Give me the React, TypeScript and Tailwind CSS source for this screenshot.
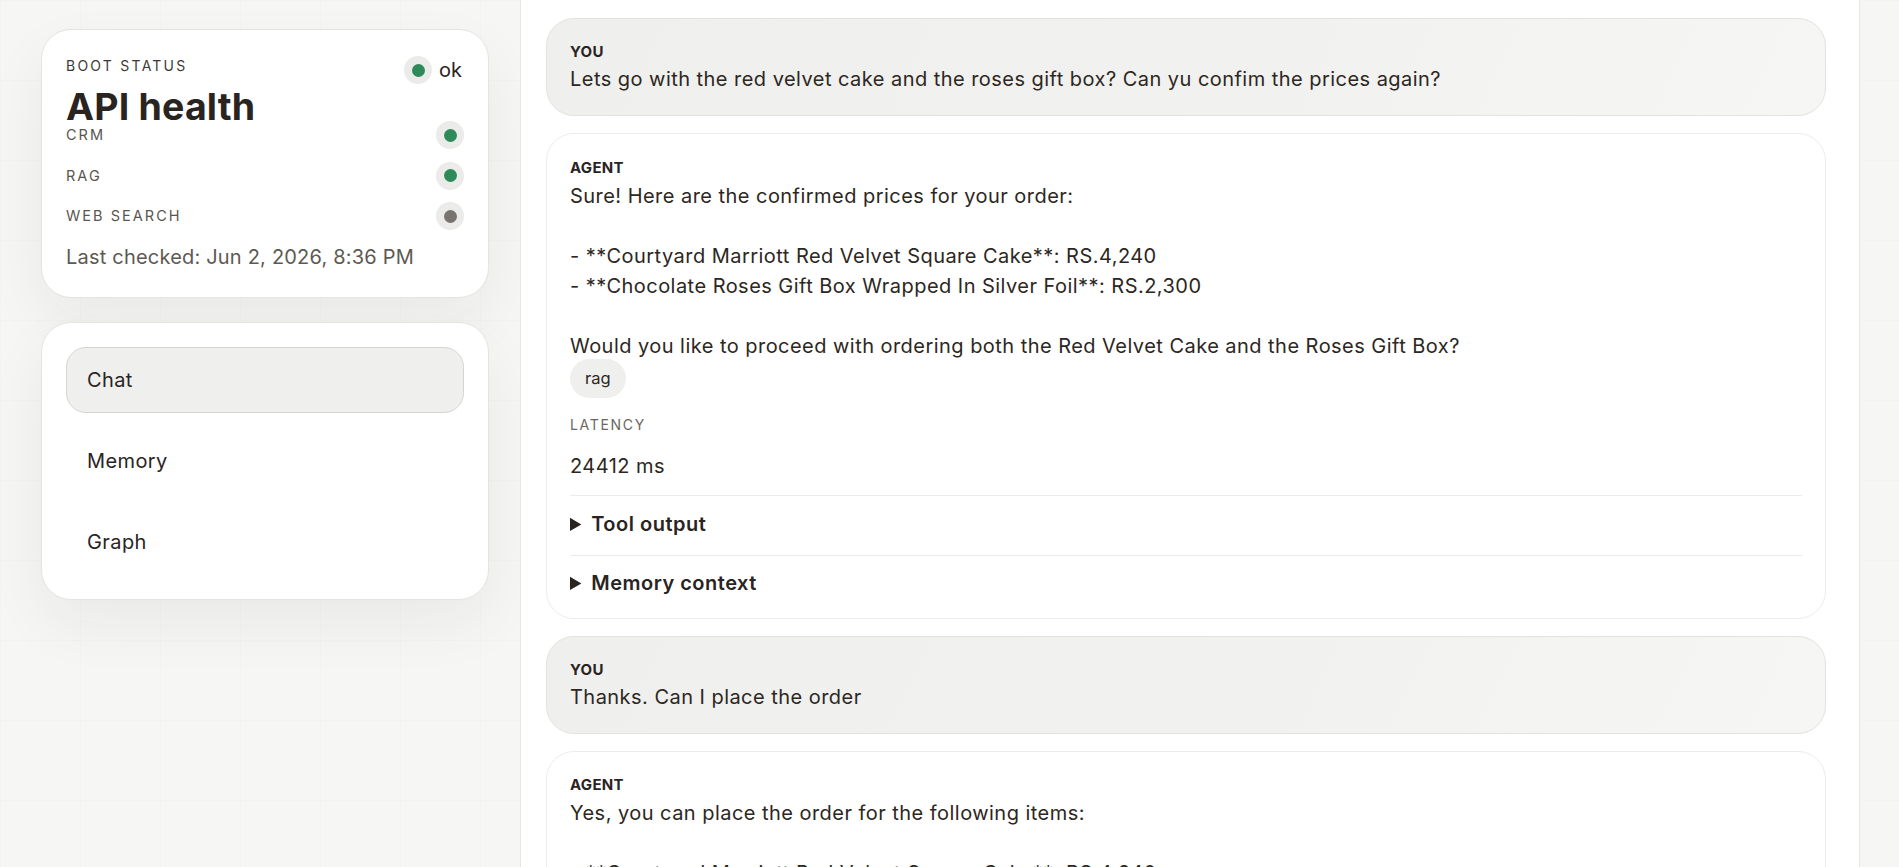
import React from "react";

const font = { fontFamily: "Inter, 'Noto Sans', sans-serif" };

// small round status light
const StatusDot = ({ tone }: { tone: string }) => (
  <span className="flex size-[28px] shrink-0 items-center justify-center rounded-full bg-[#ebebe9]">
    <span className={tone} />
  </span>
);

const green = "size-[13px] rounded-full bg-[#2e8a57]";
const grey = "size-[13px] rounded-full bg-[#7a7470]";

const services = [
  { name: "CRM", tone: green },
  { name: "RAG", tone: green },
  { name: "Web search", tone: grey },
];

const navItems = ["Chat", "Memory", "Graph"];

const HealthCard = () => (
  <section className="rounded-[30px] border border-[#e4e4e1] bg-white px-[24px] pt-[26px] pb-[25px] shadow-[0_24px_60px_rgba(40,36,30,0.06)]">
    <div className="flex items-start justify-between">
      <div>
        <p className="text-[14px] leading-[20px] tracking-[0.16em] text-[#3d3934] uppercase">Boot status</p>
        <h2 className="mt-[12px] text-[37.5px] leading-[38px] font-bold tracking-[0.005em] text-[#29241f]">API health</h2>
      </div>
      <div className="mr-[2px] flex items-center gap-[7px]">
        <StatusDot tone={green} />
        <span className="text-[20px] leading-[28px] text-[#29241f]">ok</span>
      </div>
    </div>
    <ul className="mt-[-5px] flex flex-col gap-[12.5px]">
      {services.map((s) => (
        <li key={s.name} className="flex items-center justify-between">
          <span className="text-[14.5px] tracking-[0.14em] text-[#5a5550] uppercase">{s.name}</span>
          <StatusDot tone={s.tone} />
        </li>
      ))}
    </ul>
    <p className="mt-[12px] text-[20px] leading-[30px] tracking-[0.01em] text-[#5e5953]">Last checked: Jun 2, 2026, 8:36 PM</p>
  </section>
);

const NavCard = () => (
  <nav className="flex flex-col gap-[15px] rounded-[30px] border border-[#e4e4e1] bg-white p-[24px] shadow-[0_24px_60px_rgba(40,36,30,0.06)]">
    {navItems.map((item, i) => (
      <button
        key={item}
        className={
          i === 0
            ? "flex h-[66px] items-center rounded-[20px] border border-[#d5d5d1] bg-[#eff0ee] px-[20px] text-left text-[20px] tracking-[0.02em] text-[#29241f]"
            : "flex h-[66px] items-center rounded-[20px] border border-transparent px-[20px] text-left text-[20px] tracking-[0.02em] text-[#29241f]"
        }
      >
        {item}
      </button>
    ))}
  </nav>
);

const UserBubble = ({ text }: { text: string }) => (
  <div className="shrink-0 rounded-[28px] border border-[#e2e2df] bg-[linear-gradient(115deg,#efefed_0%,#f1f1ef_55%,#f6f6f4_100%)] px-[23px] pt-[21px] pb-[21px]">
    <p className="text-[15px] leading-[24px] font-bold tracking-[0.02em] text-[#29241f]">YOU</p>
    <p className="text-[20px] leading-[30px] tracking-[0.023em] text-[#2c2722]">{text}</p>
  </div>
);

const Disclosure = ({ title, last }: { title: string; last?: boolean }) => (
  <details className={last ? "border-t border-[#ececea] pt-[12.3px]" : "border-t border-[#ececea] pt-[12.3px] pb-[15.9px]"}>
    <summary className="cursor-pointer text-[20px] leading-[30px] font-semibold tracking-[0.025em] text-[#29241f]">{title}</summary>
  </details>
);

const agentOne = `Sure! Here are the confirmed prices for your order:

- **Courtyard Marriott Red Velvet Square Cake**: RS.4,240
- **Chocolate Roses Gift Box Wrapped In Silver Foil**: RS.2,300

Would you like to proceed with ordering both the Red Velvet Cake and the Roses Gift Box?`;

const agentTwo = `Yes, you can place the order for the following items:

- **Courtyard Marriott Red Velvet Square Cake**: RS.4,240
- **Chocolate Roses Gift Box Wrapped In Silver Foil**: RS.2,300`;

const AgentCard = ({ text, meta }: { text: string; meta?: boolean }) => (
  <div className="shrink-0 rounded-[28px] border border-[#ececea] bg-white px-[23px] pt-[20.5px] pb-[20px]">
    <p className="text-[15px] leading-[26px] font-bold tracking-[0.02em] text-[#29241f]">AGENT</p>
    <p className="text-[20px] leading-[30px] tracking-[0.023em] whitespace-pre-wrap text-[#2c2722]">{text}</p>
    {meta && (
      <>
        <span className="mt-[-1.2px] flex h-[39px] w-fit items-center rounded-full bg-[#efefed] px-[15px] text-[16.5px] text-[#2c2722]">rag</span>
        <p className="mt-[17px] text-[14px] leading-[20px] tracking-[0.12em] text-[#6b6660]">LATENCY</p>
        <p className="mt-[16px] text-[20px] leading-[30px] tracking-[0.023em] text-[#2c2722]">24412 ms</p>
        <div className="mt-[14px]">
          <Disclosure title="Tool output" />
          <Disclosure title="Memory context" last />
        </div>
      </>
    )}
  </div>
);

export default function App() {
  return (
    <div
      style={font}
      className="flex h-[867px] gap-[31px] overflow-hidden bg-[#f6f6f4] bg-[linear-gradient(rgba(0,0,0,0.011)_1px,transparent_1px),linear-gradient(90deg,rgba(0,0,0,0.011)_1px,transparent_1px)] bg-[size:80px_80px] pr-[39px] pl-[41px]"
    >
      <aside className="flex w-[448px] shrink-0 flex-col gap-[24px] pt-[29px]">
        <HealthCard />
        <NavCard />
      </aside>
      <main className="flex flex-1 flex-col gap-[17px] overflow-hidden border-x border-[#e7e7e5] bg-white pt-[18px] pr-[33px] pl-[25px]">
        <UserBubble text="Lets go with the red velvet cake and the roses gift box? Can yu confim the prices again?" />
        <AgentCard text={agentOne} meta />
        <UserBubble text="Thanks. Can I place the order" />
        <AgentCard text={agentTwo} />
      </main>
    </div>
  );
}
